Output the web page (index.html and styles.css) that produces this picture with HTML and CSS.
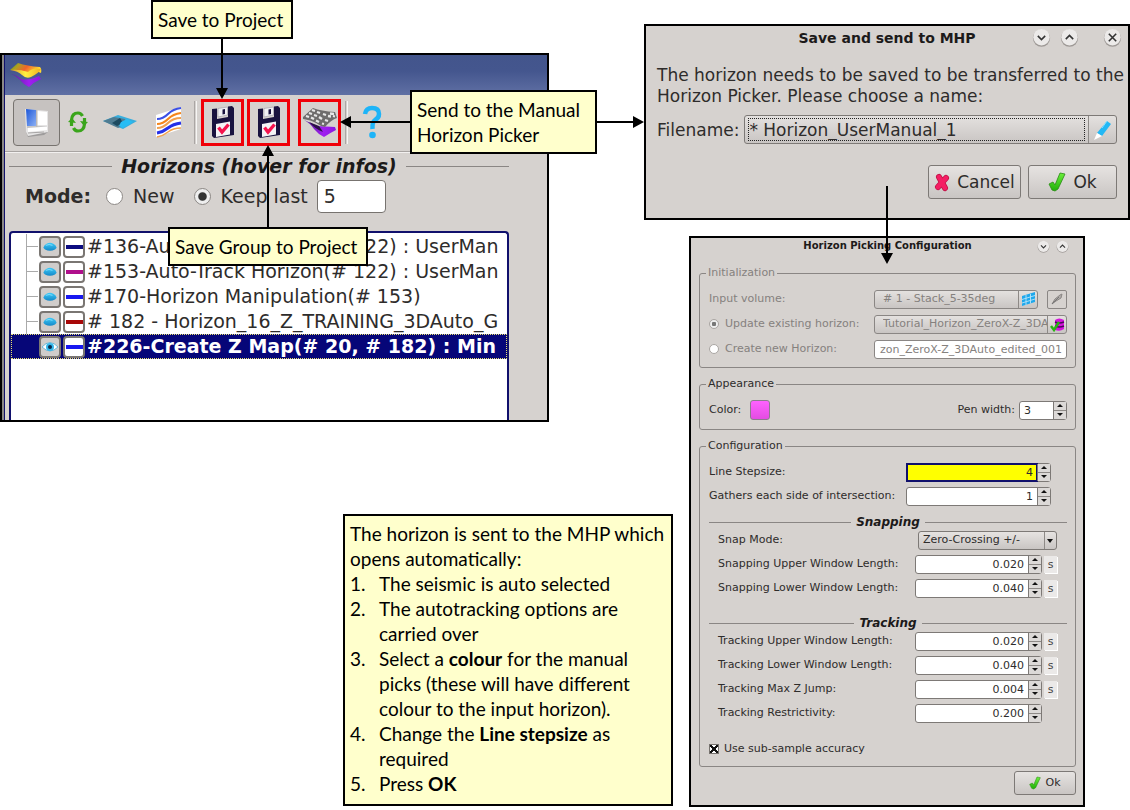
FILE: index.html
```html
<!DOCTYPE html>
<html lang="en">
<head>
<meta charset="utf-8">
<title>Sending a horizon to the Manual Horizon Picker</title>
<link rel="stylesheet" href="styles.css">
</head>
<body>
<svg class="defs" width="0" height="0" aria-hidden="true">
  <defs>
    <linearGradient id="gGreen" x1="0" y1="0" x2="0" y2="1"><stop offset="0" stop-color="#6cf03c"/><stop offset="1" stop-color="#1fae08"/></linearGradient>
    <linearGradient id="gTop" x1="0" y1="0" x2="1" y2="0.3"><stop offset="0" stop-color="#4e9a1c"/><stop offset=".3" stop-color="#b0a020"/><stop offset=".6" stop-color="#f0642c"/><stop offset="1" stop-color="#ffd830"/></linearGradient>
    <linearGradient id="gFold" x1="0" y1="0" x2="1" y2="0"><stop offset="0" stop-color="#d8902a"/><stop offset=".5" stop-color="#fff040"/><stop offset="1" stop-color="#f0b020"/></linearGradient>
    <linearGradient id="gPurple" x1="0" y1="0" x2="1" y2="0"><stop offset="0" stop-color="#5a1e9a"/><stop offset=".6" stop-color="#a01ef0"/><stop offset="1" stop-color="#8a1ae0"/></linearGradient>
    <linearGradient id="gBlue" x1="0" y1="0" x2="1" y2="1"><stop offset="0" stop-color="#1c56d8"/><stop offset="1" stop-color="#8cb0f4"/></linearGradient>
    <linearGradient id="gCyan" x1="0" y1="0" x2="0" y2="1"><stop offset="0" stop-color="#3ccaf8"/><stop offset="1" stop-color="#1488c8"/></linearGradient>
    <symbol id="floppy" viewBox="0 0 24 34">
      <path d="M1 4 6 3.500V14L17 12V1.500L21 1 23 3V30L3 33 1 31Z" fill="#19133f"/>
      <path d="M7 3.500 16.500 2V10L7 12Z" fill="#f1f1f4" stroke="#8c8a9a" stroke-width=".5"/><path d="M11.500 4.500 14 4V9L11.500 9.500Z" fill="#19133f"/>
      <path d="M5 19 19 16.500V29.500L5 32Z" fill="#f4f4f6"/>
      <path d="M7.500 22.500 11 27 17.500 19.500" fill="none" stroke="#f5144e" stroke-width="3.400"/>
    </symbol>
    <symbol id="tick" viewBox="0 0 18 20">
      <path d="M1 12 5 10 7 13 12 1 17 2 10 17 7 19 4 18Z" fill="url(#gGreen)" stroke="#2a8c14" stroke-width=".8"/>
    </symbol>
    <symbol id="dome" viewBox="0 0 18 12">
      <path d="M1 7Q2 3 5 2Q9 0 13 2Q16 3 17 7L15 9Q9 12 3 9Z" fill="url(#gCyan)"/><path d="M4 4Q8 2 12 4" fill="none" stroke="#8fe4ff"/>
    </symbol>
    <symbol id="down" viewBox="0 0 18 18"><circle cx="9" cy="9.500" r="8.200" fill="#9d9895"/><circle cx="9" cy="8.700" r="7.800" fill="#eceae9"/><path d="M5.500 7.500 9 11 12.500 7.500" fill="none" stroke="#333" stroke-width="1.500"/></symbol>
    <symbol id="up" viewBox="0 0 18 18"><circle cx="9" cy="9.500" r="8.200" fill="#9d9895"/><circle cx="9" cy="8.700" r="7.800" fill="#eceae9"/><path d="M5.500 10.500 9 7 12.500 10.500" fill="none" stroke="#333" stroke-width="1.500"/></symbol>
    <symbol id="close" viewBox="0 0 18 18"><circle cx="9" cy="9.500" r="8.200" fill="#9d9895"/><circle cx="9" cy="8.700" r="7.800" fill="#eceae9"/><path d="M5.500 5.500 12.500 12.500M12.500 5.500 5.500 12.500" fill="none" stroke="#333" stroke-width="1.500"/></symbol>
  </defs>
</svg>

<main class="board">
  <div class="stack stack-left">
    <section class="window horizons" aria-label="Horizons">
      <div class="titlebar">
        <svg width="34" height="26" viewBox="0 0 34 26"><path d="M2 12Q8 13 12 17Q20 19 30 14L32 17Q25 20 20 25Q14 22 10 17Q6 13 2 12Z" fill="url(#gPurple)"/><path d="M1 8 9 1Q18 4 31 5Q33 7 32 11Q24 7 19 11Q12 8 1 8Z" fill="url(#gTop)"/><path d="M1 8Q9 9 13 13Q17 17 22 15Q30 11 32 7Q24 5 19 10Q10 7 1 8Z" fill="url(#gFold)"/></svg>
      </div>
      <div class="toolbar">
        <button class="tool tool-on" aria-label="View panels"><svg width="26" height="32" viewBox="0 0 26 32"><path d="M2 26 22 25 24 21V26L20 29 4 31Z" fill="#9e9c9c"/><path d="M1 3 24 5V26L4 30 2 26Z" fill="#e6e5e5"/><path d="M2 3 12 4V20H3Z" fill="url(#gBlue)"/><path d="M13.500 5 23 6V19H13.500Z" fill="#fff"/><path d="M12.800 4V20.500M3 21H23M4 27 20 26" stroke="#a8a6a6" fill="none"/><path d="M4 22 23 20.500V24L4 26Z" fill="#fff"/></svg></button>
        <button class="tool narrow" aria-label="Refresh"><svg width="20" height="24" viewBox="0 0 20 24"><g fill="none" stroke="#3ba51c" stroke-width="3.200"><path d="M3.500 16V10Q4 3 10 3Q13 3 14.500 6"/><path d="M16.500 8V14Q16 21 10 21Q7 21 5.500 18"/></g><path d="M0 12 4 8 8 13ZM12 11 20 12 16 16Z" fill="#3ba51c"/></svg></button>
        <button class="tool" aria-label="Horizon"><svg width="34" height="16" viewBox="0 0 34 16"><path d="M0 7 15 1 34 7 20 15Z" fill="#37aede"/><path d="M0 7 11 3 22 5 24 10 15 14Z" fill="#4f7c92"/><path d="M9 9 17 4 20 9 14 12Z" fill="#1c4a60"/><path d="M18 8 24 5 30 8 20 14 16 12Z" fill="#27bdf5"/></svg></button>
        <button class="tool" aria-label="Seismic lines"><svg width="28" height="32" viewBox="0 0 28 32"><path d="M1 9 26 1V23L1 31Z" fill="#fff"/><g fill="none" stroke-width="2.200"><path d="M2 13Q8 13 13 8T26 2" stroke="#3c50e6"/><path d="M2 18Q8 18 13 13T26 7" stroke="#f5861c"/><path d="M2 22Q8 22 13 17T26 12" stroke="#f0a050"/><path d="M2 27Q8 26 13 22T26 17" stroke="#2530e8" stroke-width="3"/><path d="M2 31Q8 30 13 26T26 22" stroke="#f2a24c" stroke-width="1.500"/></g></svg></button>
        <span class="sep"></span>
        <button class="tool marked" aria-label="Save to project"><svg width="24" height="34"><use href="#floppy"/></svg></button>
        <button class="tool marked" aria-label="Save group to project"><svg width="24" height="34"><use href="#floppy"/></svg></button>
        <button class="tool marked last" aria-label="Send to the Manual Horizon Picker"><svg width="34" height="31" viewBox="0 0 34 31"><path d="M1 13Q8 16 14 19L32 20 33 23Q27 26 21 30Q15 27 11 22Q7 16 1 13Z" fill="url(#gPurple)"/><path d="M6 15Q12 22 20 25L16 19Z" fill="#2c1048"/><path d="M0 10 10 1Q18 4 32 5L34 11Q28 13 22 20Q17 19 13 16Q8 13 0 12Z" fill="#6e6c6c"/><path d="M3 9 6 10M8 10.500 11 12M13 13.500 16 15M19 16.500 21 17M6 6 9 7M11 8 14 9M16 10 19 12M22 13 25 14M9 3 12 4M14 5 17 6M20 7 23 8M25 9 28 9.500M27 6.500 31 7M30 9 32 9.500" stroke="#e8e8e8" stroke-width="2.300"/></svg></button>
        <span class="sep"></span>
        <button class="tool help" aria-label="Help"><svg width="20" height="34" viewBox="0 0 20 34"><path d="M3 9Q4 3 10 3Q17 3 17 9Q17 13 13 15Q10 17 10.500 24" fill="none" stroke="#1eb4f8" stroke-width="4.500"/><circle cx="10.500" cy="30" r="3.300" fill="#1eb4f8"/></svg></button>
      </div>
      <div class="horizons-body">
        <h2 class="rule-title big">Horizons (hover for infos)</h2>
        <div class="mode">
          <b>Mode:</b>
          <input type="radio" name="mode" id="m-new" class="radio"><label for="m-new">New</label>
          <input type="radio" name="mode" id="m-keep" class="radio" checked><label for="m-keep">Keep last</label>
          <input type="text" class="count" value="5" aria-label="Number of horizons to keep">
        </div>
        <ul class="tree">
          <li><button class="chip eye" aria-label="Show"><svg width="16" height="10"><use href="#dome"/></svg></button><button class="chip line navy" aria-label="Colour"></button><span>#136-Auto-Track Horizon(# 122) : UserMan</span></li>
          <li><button class="chip eye" aria-label="Show"><svg width="16" height="10"><use href="#dome"/></svg></button><button class="chip line magenta" aria-label="Colour"></button><span>#153-Auto-Track Horizon(# 122) : UserMan</span></li>
          <li><button class="chip eye" aria-label="Show"><svg width="16" height="10"><use href="#dome"/></svg></button><button class="chip line blue" aria-label="Colour"></button><span>#170-Horizon Manipulation(# 153)</span></li>
          <li><button class="chip eye" aria-label="Show"><svg width="16" height="10"><use href="#dome"/></svg></button><button class="chip line red" aria-label="Colour"></button><span># 182 - Horizon_16_Z_TRAINING_3DAuto_G</span></li>
          <li class="selected"><button class="chip eye" aria-label="Hide"><svg width="16" height="12" viewBox="0 0 16 12"><path d="M0 6Q8-3 16 6Q8 14 0 6Z" fill="#fff" stroke="#6bb5d4"/><circle cx="8" cy="6" r="4" fill="#35b8ec"/><circle cx="8" cy="6" r="2" fill="#0a2a4a"/></svg></button><button class="chip line blue" aria-label="Colour"></button><span>#226-Create Z Map(# 20, # 182) : Min</span></li>
        </ul>
      </div>
    </section>

    <section class="note">
      <p>The horizon is sent to the MHP which opens automatically:</p>
      <ol>
        <li>The seismic is auto selected</li>
        <li>The autotracking options are carried over</li>
        <li>Select a <b>colour</b> for the manual picks (these will have different colour to the input horizon).</li>
        <li>Change the <b>Line stepsize</b> as required</li>
        <li>Press <b>OK</b></li>
      </ol>
    </section>
  </div>

  <div class="stack stack-right">
    <section class="window send">
      <header class="dialog-title">
        <h2>Save and send to MHP</h2>
        <div class="win-buttons">
          <button aria-label="Minimise"><svg width="19" height="19"><use href="#down"/></svg></button>
          <button aria-label="Maximise"><svg width="19" height="19"><use href="#up"/></svg></button>
          <button class="apart" aria-label="Close"><svg width="19" height="19"><use href="#close"/></svg></button>
        </div>
      </header>
      <p>The horizon needs to be saved to be transferred to the Horizon Picker. Please choose a name:</p>
      <div class="filename">
        <label for="fname">Filename:</label>
        <div class="combo">
          <input id="fname" type="text" value="* Horizon_UserManual_1">
          <button aria-label="Edit name"><svg width="19" height="20" viewBox="0 0 19 20"><path d="M14 1 18 4 9 16 4 13Z" fill="#22b8f5"/><path d="M4 13 9 16 1 20Z" fill="#fff"/><path d="M14 1 9 8" stroke="#8be0ff"/></svg></button>
        </div>
      </div>
      <div class="actions">
        <button class="push"><svg width="16" height="19" viewBox="0 0 16 19"><path d="M5 4 11 15M12 5 4 14" stroke="#c01448" stroke-width="6" stroke-linecap="round"/><path d="M5 4 11 15M12 5 4 14" stroke="#f51e64" stroke-width="4.500" stroke-linecap="round"/></svg>Cancel</button>
        <button class="push"><svg width="18" height="20"><use href="#tick"/></svg>Ok</button>
      </div>
    </section>

    <section class="window config">
      <header class="dialog-title small">
        <h2>Horizon Picking Configuration</h2>
        <div class="win-buttons">
          <button aria-label="Minimise"><svg width="13" height="13"><use href="#down"/></svg></button>
          <button aria-label="Maximise"><svg width="13" height="13"><use href="#up"/></svg></button>
        </div>
      </header>

      <fieldset class="disabled">
        <legend>Initialization</legend>
        <div class="row">
          <label for="vol">Input volume:</label>
          <div class="wide">
            <div class="combo mini"><input id="vol" type="text" value="# 1 - Stack_5-35deg" readonly><button aria-label="Choose volume"><svg width="14" height="14" viewBox="0 0 14 14"><path d="M1 4 14 0V10L1 14Z" fill="#1fa8ec"/><path d="M1 7.500 14 3.500M1 11 14 7M5 3V13M9.500 2V11.500" stroke="#b8e4f8" stroke-width=".9"/></svg></button></div>
            <button class="square" aria-label="Pick volume"><svg width="12" height="12" viewBox="0 0 12 12"><path d="M1 11 4 6 9 2 11 1 10 5 5 8Z" fill="#b0acaa" stroke="#8a8684"/><path d="M1 11 8 4" stroke="#777"/></svg></button>
          </div>
        </div>
        <div class="row">
          <input type="radio" name="target" id="t-up" class="radio" checked><label for="t-up">Update existing horizon:</label>
          <div class="wide"><div class="combo mini"><input type="text" value="Tutorial_Horizon_ZeroX-Z_3DAuto" aria-label="Existing horizon" readonly><button aria-label="Choose horizon"><svg width="15" height="15" viewBox="0 0 15 15"><path d="M5 3Q9 0 14 3V12Q10 15 5 13Z" fill="#d414dc"/><path d="M5 5Q9 7 14 5M5 9Q9 11 14 9" fill="none" stroke="#4a0a5a" stroke-width="1.500"/><path d="M1 9 4 13 9 5" fill="none" stroke="#28b414" stroke-width="2.500"/></svg></button></div></div>
        </div>
        <div class="row">
          <input type="radio" name="target" id="t-new" class="radio"><label for="t-new">Create new Horizon:</label>
          <div class="wide"><input type="text" class="field tail" value="zon_ZeroX-Z_3DAuto_edited_001" aria-label="New horizon name"></div>
        </div>
      </fieldset>

      <fieldset>
        <legend>Appearance</legend>
        <div class="row">
          <label for="colour">Color:</label><button id="colour" class="swatch"></button>
          <label class="push-right" for="pen">Pen width:</label>
          <div class="spin pen"><input id="pen" type="text" value="3"><span><button aria-label="Up"></button><button aria-label="Down"></button></span></div>
        </div>
      </fieldset>

      <fieldset class="configuration">
        <legend>Configuration</legend>
        <div class="row"><label for="step">Line Stepsize:</label><div class="spin step hot"><input id="step" type="text" value="4"><span><button aria-label="Up"></button><button aria-label="Down"></button></span></div></div>
        <div class="row"><label for="gather">Gathers each side of intersection:</label><div class="spin step"><input id="gather" type="text" value="1"><span><button aria-label="Up"></button><button aria-label="Down"></button></span></div></div>

        <h3 class="rule-title">Snapping</h3>
        <div class="inner">
          <div class="row"><label for="mode">Snap Mode:</label><div class="select"><select id="mode"><option>Zero-Crossing +/-</option></select></div></div>
          <div class="row"><label for="su">Snapping Upper Window Length:</label><div class="spin"><input id="su" type="text" value="0.020"><span><button aria-label="Up"></button><button aria-label="Down"></button></span></div><span class="unit">s</span></div>
          <div class="row"><label for="sl">Snapping Lower Window Length:</label><div class="spin"><input id="sl" type="text" value="0.040"><span><button aria-label="Up"></button><button aria-label="Down"></button></span></div><span class="unit">s</span></div>
        </div>

        <h3 class="rule-title tracking">Tracking</h3>
        <div class="inner">
          <div class="row"><label for="tu">Tracking Upper Window Length:</label><div class="spin"><input id="tu" type="text" value="0.020"><span><button aria-label="Up"></button><button aria-label="Down"></button></span></div><span class="unit">s</span></div>
          <div class="row"><label for="tl">Tracking Lower Window Length:</label><div class="spin"><input id="tl" type="text" value="0.040"><span><button aria-label="Up"></button><button aria-label="Down"></button></span></div><span class="unit">s</span></div>
          <div class="row"><label for="tz">Tracking Max Z Jump:</label><div class="spin"><input id="tz" type="text" value="0.004"><span><button aria-label="Up"></button><button aria-label="Down"></button></span></div><span class="unit">s</span></div>
          <div class="row"><label for="tr">Tracking Restrictivity:</label><div class="spin"><input id="tr" type="text" value="0.200"><span><button aria-label="Up"></button><button aria-label="Down"></button></span></div><span class="unit blank"></span></div>
        </div>
        <div class="row sub"><input type="checkbox" class="check" id="sub" checked><label for="sub">Use sub-sample accuracy</label></div>
      </fieldset>

      <div class="actions">
        <button class="push mini-push"><svg width="12" height="14"><use href="#tick"/></svg>Ok</button>
      </div>
    </section>
  </div>

  <div class="callout save">Save to Project</div>
  <div class="callout group">Save Group to Project</div>
  <div class="callout picker">Send to the Manual<br>Horizon Picker</div>

  <svg class="arrows" width="1130" height="810" aria-hidden="true">
    <g stroke="#000" stroke-width="2"><path d="M222 39V90M268 228V154M411 122H350M597 122H634M887 186V254"/></g>
    <path d="M216 88H228L222 99ZM262 156H274L268 145ZM351 116V128L340 122ZM633 116V128L644 122ZM881 253H893L887 264Z"/>
  </svg>
</main>
</body>
</html>
```
FILE: styles.css
```css
* { box-sizing: border-box; }

body {
  margin: 0;
  background: #fff;
  color: #2e2c2b;
  font: 11px/14px "DejaVu Sans", sans-serif;
}

h2, h3, p, ol, ul { margin: 0; padding: 0; }
button, input, select { font: inherit; color: inherit; margin: 0; padding: 0; }
button { border: 0; background: none; display: flex; align-items: center; justify-content: center; flex: none; }
svg { display: block; flex: none; }
.defs { position: absolute; }

/* Board: two overlapping stacks sharing one set of columns */
.board {
  position: relative;
  display: grid;
  grid-template-columns: 343fr 206fr 95fr 29fr 16fr 396fr 45fr;
}
.stack { grid-row: 1; display: grid; grid-template-columns: subgrid; align-content: start; }
.stack-left { grid-column: 1 / 5; padding-top: 53px; row-gap: 92px; }
.stack-right { grid-column: 4 / 8; padding-top: 24px; row-gap: 16px; }
.horizons { grid-column: 1 / 3; }
.note { grid-column: 2 / 5; }

.window { border: 2px solid #000; background: #d6d2cf; min-width: 0; }

/* Horizons window */
.horizons { padding-left: 3px; background: linear-gradient(to right, #8a8887 2px, #10106c 2px, #10106c 3px, #d6d2cf 3px); overflow: hidden; }
.titlebar { height: 40px; padding: 7px 4px; background: linear-gradient(#43558c, #44568e 40%, #6070a4); }
.toolbar { display: flex; align-items: center; height: 57px; padding: 0 0 2px 8px; border-bottom: 1px solid #a8a4a2; box-shadow: 0 1px #f2f0ef; }
.tool { width: 49px; height: 47px; }
.tool.narrow { width: 35px; }
.tool-on { width: 47px; border: 1px solid #77736f; border-radius: 4px; background: #c6c2c0; }
.sep { width: 3px; height: 43px; margin: 0 4px 0 1px; border-left: 1px solid #aaa6a4; border-right: 1px solid #f6f5f4; }
.tool.marked { width: 43px; margin-right: 3px; border: 3px solid #f00008; }
.tool.marked.last { margin-left: 5px; }
.tool.help { width: 40px; }
.horizons-body { padding: 3px 38px 0 4px; font-size: 19px; line-height: 25px; }

.rule-title { display: flex; align-items: center; gap: 5px; color: #1c1a1a; font-size: 12px; line-height: 16px; font-style: italic; font-weight: bold; }
.rule-title::before, .rule-title::after { content: ""; flex: 1; height: 1px; background: #8a8684; }
.rule-title.big { gap: 9px; font-size: 19px; line-height: 22px; }

.mode { display: flex; align-items: center; height: 34px; margin: 2px 0 18px; padding-left: 16px; }
.mode b { margin-right: 15px; }
.radio { appearance: none; flex: none; width: 10px; height: 10px; border: 1px solid #8d8986; border-radius: 50%; background: #fff; margin-right: 6px; }
.radio:checked { background: radial-gradient(circle, #333 35%, #eee 45%); }
.mode .radio { width: 17px; height: 17px; margin-right: 10px; }
.mode label + .radio { margin-left: 19px; }
.count { width: 69px; height: 33px; margin-left: 9px; padding-left: 6px; border: 1px solid #77736f; border-radius: 4px; background: #fff; }

.tree { list-style: none; height: 189px; padding-top: 1px; border: 2px solid #10106c; border-bottom: 0; border-radius: 4px 4px 0 0; background: #fff; overflow: hidden; }
.tree li { display: flex; align-items: center; height: 25px; padding-left: 28px; white-space: nowrap; background: linear-gradient(#aaa, #aaa) 15px 12px / 12px 1px no-repeat, linear-gradient(#aaa, #aaa) 15px 0 / 1px 25px no-repeat; }
.tree .selected { background: #060678; color: #fff; font-weight: bold; outline: 1px dotted #e8e070; outline-offset: -1px; }
.chip { width: 22px; height: 22px; margin-right: 2px; border: 2px solid #7a7672; border-radius: 4px; background: #fff; }
.chip.eye { background: #d0cdcb; }
.line::before { content: ""; width: 17px; height: 4px; background: currentColor; }
.navy { color: #0c0c80; } .magenta { color: #b0108c; } .blue { color: #1818f0; } .red { color: #a80808; }

/* Yellow annotations */
.note, .callout { border: 2px solid #000; background: #ffffcc; color: #000; font: 19px/25px Lato, sans-serif; }
.note { padding: 5px; min-height: 292px; }
.note ol { list-style: none; counter-reset: n; }
.note li { display: block; position: relative; padding-left: 29px; counter-increment: n; }
.note li::before { content: counter(n) "."; position: absolute; left: 0; }
.callout { position: absolute; white-space: nowrap; padding: 5px; }
.save { left: 151px; top: 0; width: 142px; }
.group { left: 168px; top: 227px; width: 200px; }
.picker { left: 410px; top: 90px; width: 187px; }
.arrows { position: absolute; left: 0; top: 0; pointer-events: none; }

/* Dialogs */
.dialog-title { position: relative; display: flex; align-items: center; justify-content: center; height: 23px; color: #1c1a1a; }
.dialog-title h2 { font-size: 14px; line-height: 20px; }
.win-buttons { position: absolute; right: 6px; display: flex; gap: 9px; }
.win-buttons .apart { margin-left: 15px; }
.dialog-title.small { height: 16px; margin-bottom: 12px; }
.dialog-title.small h2 { font-size: 10px; line-height: 14px; }
.small .win-buttons { right: 7px; gap: 6px; }

.send { grid-column: 1 / 5; font-size: 17px; line-height: 22px; padding-bottom: 19px; }
.send p { padding: 16px 0 8px 11px; line-height: 21px; }
.filename { display: flex; align-items: center; gap: 5px; padding: 0 11px; }
.combo { flex: 1; min-width: 0; display: flex; height: 29px; border: 1px solid #7d7976; border-radius: 3px; background: linear-gradient(#e4e1df, #c9c5c3); }
.combo input { flex: 1; min-width: 0; border: 0; background: none; }
.combo button { width: 28px; border-left: 1px solid #8d8986; }
.send .combo input { margin: 2px 3px; border: 1px dotted #222; }
.actions { display: flex; justify-content: flex-end; gap: 7px; }
.send .actions { padding: 21px 11px 0; }
.push { gap: 7px; width: 89px; height: 34px; border: 1px solid #7d7976; border-radius: 3px; background: linear-gradient(#e6e3e1, #c9c5c3); }
.send .push:first-child { width: 93px; }

/* Picking configuration */
.config { grid-column: 3 / 4; padding: 0 7px 10px 8px; }
fieldset { min-width: 0; margin: 0 0 9px; padding: 9px 8px 9px 9px; border: 1px solid #8a8684; border-radius: 3px; }
legend { margin-left: -3px; padding: 0 2px; }
.row { display: flex; align-items: center; height: 20px; }
.row + .row { margin-top: 4px; }
.disabled { padding-bottom: 8px; color: #85817e; }
.disabled .row + .row { margin-top: 5px; }
.disabled .radio { border-color: #aaa6a3; }
.disabled .radio:checked { background: radial-gradient(circle, #777 35%, #eee 45%); }
.wide { display: flex; gap: 9px; width: 193px; margin-left: auto; }
.combo.mini { height: 19px; border-color: #8a8684; }
.combo.mini input { padding-left: 8px; }
.combo.mini button { width: 19px; }
.square { width: 20px; height: 19px; border: 1px solid #8a8684; border-radius: 2px; }
.field { width: 100%; height: 19px; border: 1px solid #8a8684; border-radius: 3px; background: #fff; }
.tail { direction: rtl; padding-right: 4px; }
.swatch { width: 20px; height: 20px; margin-left: 9px; border: 1px solid #8d7a8d; border-radius: 3px; background: linear-gradient(#ff62ff, #e44ce2); }
.push-right { margin-left: auto; margin-right: 4px; }

.spin { display: flex; width: 127px; height: 19px; margin-left: auto; border: 1px solid #7d7976; border-radius: 3px; background: #fff; }
.spin input { flex: 1; min-width: 0; padding: 1px 4px 0 0; border: 0; background: none; text-align: right; }
.spin span { display: flex; flex-direction: column; width: 13px; border-left: 1px solid #7d7976; background: #dcd9d7; }
.spin button { flex: 1; }
.spin button + button { border-top: 1px solid #8d8986; }
.spin button::before { content: ""; border: 3px solid transparent; border-top: 0; border-bottom: 3px solid #111; }
.spin button + button::before { border-top: 3px solid #111; border-bottom: 0; }
.spin.pen { width: 48px; margin-left: 0; }
.pen input { padding-left: 4px; text-align: left; }
.spin.step { width: 145px; margin-right: 16px; }
.spin.hot input { background: #ff0; box-shadow: 0 0 0 1px #10106c, inset 0 0 0 1px #10106c; }

.configuration { margin-bottom: 4px; }
.configuration .rule-title { margin-top: 8px; }
.configuration .rule-title.tracking { margin-top: 17px; }
.inner { padding: 0 10px 0 9px; }
.unit { width: 13px; height: 17px; margin-left: 2px; background: #ebe9e8; color: #444; text-align: center; line-height: 17px; box-shadow: 1px 1px #fff; }
.unit.blank { background: none; box-shadow: none; }
.select { position: relative; width: 139px; height: 19px; margin-left: auto; }
.select select { appearance: none; width: 100%; height: 100%; padding-left: 4px; border: 1px solid #7d7976; border-radius: 3px; background: linear-gradient(to right, transparent 125px, #8d8986 125px, #8d8986 126px, transparent 126px), linear-gradient(#e6e3e1, #c9c5c3); }
.select::after { content: ""; position: absolute; right: 4px; top: 8px; border: 3px solid transparent; border-top: 4px solid #111; border-bottom: 0; }
.sub { height: 16px; margin-top: 18px; }
.check { appearance: none; width: 10px; height: 10px; margin-right: 5px; border: 1px solid #77736f; background: linear-gradient(45deg, transparent 40%, #111 40%, #111 60%, transparent 60%), linear-gradient(-45deg, #fff 40%, #111 40%, #111 60%, #fff 60%); }
.mini-push { width: 62px; height: 24px; gap: 4px; }
```
